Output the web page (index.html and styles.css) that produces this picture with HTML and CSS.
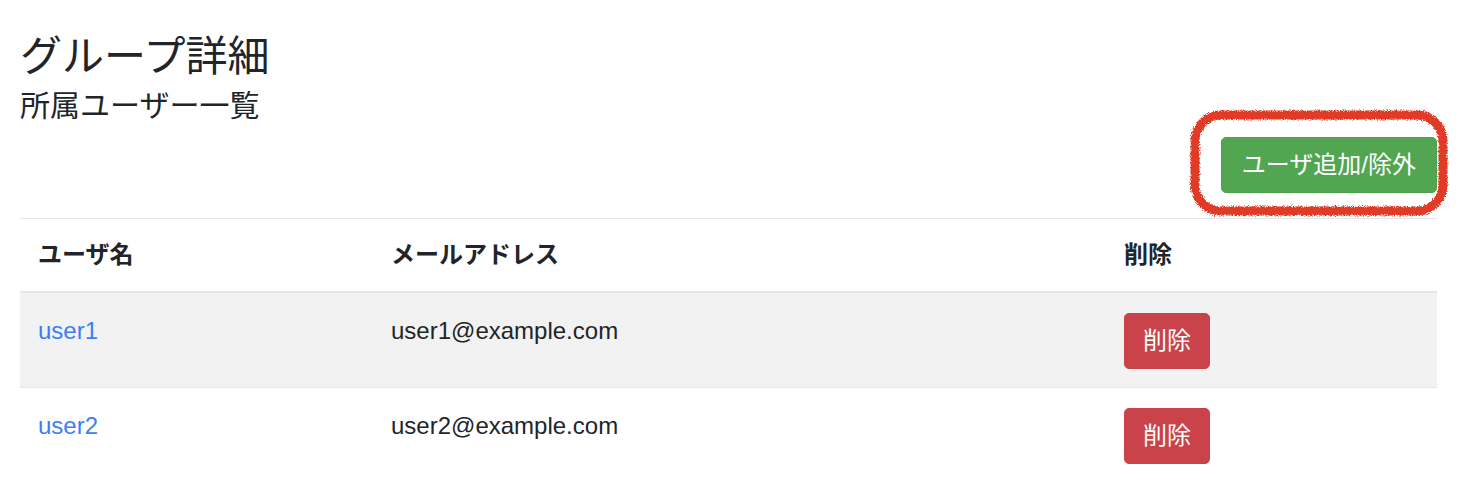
FILE: index.html
```html
<!DOCTYPE html>
<html lang="ja">
<head>
<meta charset="utf-8">
<title>グループ詳細</title>
<link rel="stylesheet" href="styles.css">
</head>
<body>
<div class="page">
  <h3 class="title">グループ詳細</h3>
  <h5 class="subtitle">所属ユーザー一覧</h5>
  <div class="toolbar">
    <button class="btn btn-success" type="button">ユーザ追加/除外</button>
  </div>
  <table class="table">
    <colgroup>
      <col class="col-name">
      <col class="col-mail">
      <col class="col-del">
    </colgroup>
    <thead>
      <tr>
        <th>ユーザ名</th>
        <th>メールアドレス</th>
        <th>削除</th>
      </tr>
    </thead>
    <tbody>
      <tr class="striped">
        <td><a href="#" class="user-link">user1</a></td>
        <td>user1@example.com</td>
        <td><button class="btn btn-danger" type="button">削除</button></td>
      </tr>
      <tr>
        <td><a href="#" class="user-link">user2</a></td>
        <td>user2@example.com</td>
        <td><button class="btn btn-danger" type="button">削除</button></td>
      </tr>
    </tbody>
  </table>
  <svg class="annotation" width="260" height="108" viewBox="0 0 260 108" aria-hidden="true">
    <defs>
      <filter id="rough" x="-10%" y="-10%" width="120%" height="120%">
        <feTurbulence type="fractalNoise" baseFrequency="1.1" numOctaves="2" seed="3" result="noise"/>
        <feDisplacementMap in="SourceGraphic" in2="noise" scale="5" xChannelSelector="R" yChannelSelector="G"/>
      </filter>
    </defs>
    <rect x="6" y="6" width="248" height="96" rx="26" ry="26" fill="none" stroke="#e03a26" stroke-width="9" filter="url(#rough)"/>
  </svg>
</div>
</body>
</html>
```
FILE: styles.css
```css
html, body {
  margin: 0;
  padding: 0;
  background: #ffffff;
}

body {
  font-family: "Liberation Sans", "Noto Sans CJK JP", sans-serif;
  color: #212529;
  font-size: 24px;
  line-height: 1.5;
}

.page {
  position: relative;
  padding: 32px 35px 0 20px;
}

.title {
  margin: 0;
  font-size: 42px;
  line-height: 50px;
  font-weight: 400;
}

.subtitle {
  margin: 6px 0 0;
  font-size: 30px;
  line-height: 36px;
  font-weight: 400;
}

.toolbar {
  display: flex;
  justify-content: flex-end;
  margin-top: 13px;
}

.btn {
  font-family: "Liberation Sans", "Noto Sans CJK JP", sans-serif;
  font-size: 24px;
  line-height: 1;
  height: 56px;
  color: #ffffff;
  border: 1px solid transparent;
  border-radius: 5px;
  cursor: pointer;
}

.btn-success {
  background: #52a652;
  border-color: #4fa24f;
  padding: 0 20px;
}

.btn-danger {
  background: #cb434a;
  border-color: #c8424a;
  padding: 0 18px;
  width: 86px;
}

.table {
  width: 100%;
  margin-top: 25px;
  border-collapse: collapse;
  table-layout: fixed;
}

.col-name { width: 353px; }
.col-mail { width: 733px; }
.col-del { width: 331px; }

.table th,
.table td {
  text-align: left;
  vertical-align: top;
  border-top: 1px solid #e3e6ea;
}

.table th {
  padding: 18px;
  font-weight: 700;
  line-height: 36px;
  border-bottom: 2px solid #e3e6ea;
}

.table td {
  padding: 20px 18px 18px;
  line-height: 36px;
}

.striped td {
  background: #f2f2f2;
}

.table td .btn {
  display: block;
}

.user-link {
  color: #3a80f4;
  text-decoration: none;
}

.annotation {
  position: absolute;
  left: 1189px;
  top: 109px;
}
```
